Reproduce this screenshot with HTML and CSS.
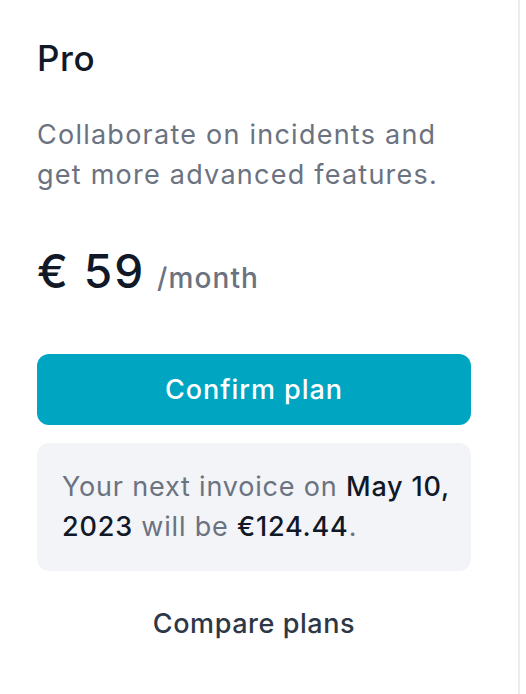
FILE: index.html
```html
<!DOCTYPE html>
<html lang="en">
<head>
<meta charset="utf-8">
<title>Pro plan</title>
<link rel="stylesheet" href="styles.css">
</head>
<body>
<section class="card">
  <div class="content">
    <h2 class="title">Pro</h2>
    <p class="desc">Collaborate on incidents and get more advanced features.</p>
    <div class="price"><span class="amount">€ 59</span><span class="period">/month</span></div>
    <button class="confirm" type="button">Confirm plan</button>
    <div class="invoice">Your next invoice on <strong>May 10, 2023</strong> will be <strong>€124.44</strong>.</div>
    <a class="compare" href="#">Compare plans</a>
  </div>
</section>
</body>
</html>
```
FILE: styles.css
```css
html, body {
  margin: 0;
  padding: 0;
  background: #ffffff;
}
body {
  font-family: Inter, "Noto Sans", "Liberation Sans", sans-serif;
  color: #111827;
  letter-spacing: 0.035em;
}
.card {
  box-sizing: border-box;
  width: 520px;
  min-height: 694px;
  border-right: 2px solid #ececec;
  padding: 38px 0 0 37px;
}
.content {
  width: 434px;
  display: flex;
  flex-direction: column;
}
.title {
  margin: 0;
  height: 40px;
  font-size: 35px;
  line-height: 40px;
  font-weight: 500;
  color: #111827;
}
.desc {
  margin: 37px 0 0;
  height: 80px;
  font-size: 27px;
  line-height: 40px;
  color: #6b7280;
  font-weight: 400;
  letter-spacing: 0.046em;
}
.price {
  margin-top: 50px;
  height: 52px;
  display: flex;
  align-items: baseline;
  gap: 12px;
  line-height: 52px;
}
.amount {
  font-size: 46px;
  font-weight: 500;
  color: #111827;
  letter-spacing: 0.04em;
}
.period {
  font-size: 28px;
  font-weight: 500;
  color: #6b7280;
  letter-spacing: 0.04em;
}
.confirm {
  margin-top: 57px;
  height: 71px;
  padding: 0;
  border: 0;
  border-radius: 12px;
  background: #00a5c1;
  color: #ffffff;
  font-family: inherit;
  letter-spacing: 0.035em;
  font-size: 27px;
  font-weight: 500;
  cursor: pointer;
}
.invoice {
  margin-top: 18px;
  box-sizing: border-box;
  height: 128px;
  padding: 24px 10px 24px 25px;
  border-radius: 12px;
  background: #f2f4f7;
  font-size: 27px;
  line-height: 40px;
  color: #6b7280;
  letter-spacing: 0.03em;
}
.invoice strong {
  font-weight: 500;
  color: #111827;
}
.compare {
  margin-top: 33px;
  text-align: center;
  font-size: 27px;
  line-height: 40px;
  font-weight: 500;
  color: #2d3748;
  text-decoration: none;
}
```
